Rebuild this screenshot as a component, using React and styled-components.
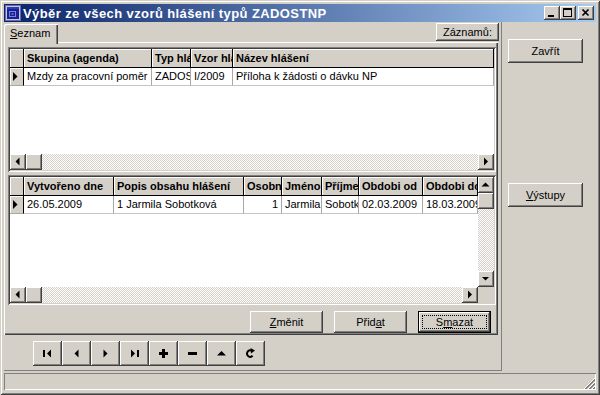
import styled, { createGlobalStyle } from 'styled-components'

const FACE = '#d4d0c8'
const SHADOW = '#808080'
const DARK = '#404040'

const raisedBevel = `
  box-shadow: inset -1px -1px ${DARK}, inset 1px 1px #fff,
    inset -2px -2px ${SHADOW}, inset 2px 2px ${FACE};
`

const sunkenBevel = `
  box-shadow: inset 1px 1px ${SHADOW}, inset -1px -1px #fff,
    inset 2px 2px ${DARK}, inset -2px -2px ${FACE};
`

const GlobalStyle = createGlobalStyle`
  html, body {
    margin: 0;
    padding: 0;
    background: #fff;
  }

  body {
    color: #000;
    font-family: "Liberation Sans", Arial, sans-serif;
    font-size: 11px;
  }

  * {
    box-sizing: border-box;
  }
`

const Window = styled.div`
  display: flex;
  width: 600px;
  height: 395px;
  flex-direction: column;
  padding: 4px;
  background: ${FACE};
  box-shadow: inset 1px 1px ${FACE}, inset -1px -1px ${DARK},
    inset 2px 2px #fff, inset -2px -2px ${SHADOW};
`

const TitleBar = styled.div`
  display: flex;
  height: 18px;
  flex: none;
  align-items: center;
  padding: 0 2px 0 1px;
  background: linear-gradient(to right, #0a246a, #a6caf0);
`

const TitleText = styled.span`
  margin-left: 2px;
  color: #fff;
  font-size: 13px;
  font-weight: bold;
  letter-spacing: 0.4px;
  white-space: nowrap;
`

const CaptionButtons = styled.div`
  display: flex;
  margin-left: auto;
`

const CaptionButton = styled.div`
  display: grid;
  width: 16px;
  height: 14px;
  margin-left: ${({ $gap }) => $gap || 0}px;
  place-items: center;
  background: ${FACE};
  ${raisedBevel}
`

const Main = styled.div`
  display: flex;
  height: 349px;
  flex: none;
`

const LeftPanel = styled.div`
  display: flex;
  width: 498px;
  flex-direction: column;
  box-shadow: inset -1px -1px ${SHADOW};
`

const TabStrip = styled.div`
  display: flex;
  height: 20px;
  align-items: flex-start;
`

const Tab = styled.div`
  position: relative;
  z-index: 1;
  display: flex;
  width: 54px;
  height: 20px;
  align-items: center;
  margin-top: 2px;
  padding: 0 0 2px 6px;
  background: ${FACE};
  box-shadow: inset 1px 1px #fff, inset -1px 0 ${DARK}, inset -2px 0 ${SHADOW};
  border-top-left-radius: 2px;
`

const Button = styled.button`
  display: flex;
  width: ${({ $width }) => $width}px;
  height: ${({ $height }) => $height}px;
  align-items: center;
  justify-content: center;
  padding: ${({ $default }) => ($default ? '4px' : '0')};
  border: 0;
  color: #000;
  background: ${FACE};
  font: inherit;
  ${({ $default }) =>
    $default
      ? `box-shadow: inset 0 0 0 1px #000, inset -2px -2px ${DARK},
          inset 2px 2px #fff, inset -3px -3px ${SHADOW};`
      : raisedBevel}
`

const FocusRing = styled.span`
  display: flex;
  width: 100%;
  height: 100%;
  align-items: center;
  justify-content: center;
  border: 1px dotted #000;
`

const CountButton = styled(Button)`
  margin: 1px 3px 0 auto;
`

const Mnemonic = styled.span`
  text-decoration: underline;
`

const TabPage = styled.div`
  display: flex;
  width: 494px;
  height: 293px;
  flex-direction: column;
  padding: 5px 0 0 4px;
  background: ${FACE};
  box-shadow: inset 1px 1px #fff, inset -1px -1px ${DARK},
    inset -2px -2px ${SHADOW};
`

const Splitter = styled.div`
  height: 3px;
  flex: none;
`

const GridFrame = styled.div`
  display: grid;
  width: 488px;
  height: ${({ $height }) => $height}px;
  flex: none;
  grid-template-columns: ${({ $vscroll }) => ($vscroll ? '1fr 16px' : '1fr')};
  grid-template-rows: 1fr 16px;
  padding: 2px;
  background: #fff;
  ${sunkenBevel}
`

const GridBody = styled.div`
  min-width: 0;
  overflow: hidden;
  background: #fff;
`

const Row = styled.div`
  display: grid;
  grid-template-columns: ${({ $cols }) => $cols};
`

const HeaderCell = styled.div`
  height: 19px;
  padding: 0 1px 0 3px;
  overflow: hidden;
  border-right: 1px solid #000;
  border-bottom: 1px solid #000;
  background: ${FACE};
  box-shadow: inset 1px 1px #fff;
  font-weight: bold;
  line-height: 18px;
  white-space: nowrap;
`

const Cell = styled.div`
  height: 18px;
  padding: 0 3px;
  overflow: hidden;
  border-right: 1px solid #a8a8a8;
  border-bottom: 1px solid #c4c4c4;
  line-height: 17px;
  text-align: ${({ $align }) => $align || 'left'};
  white-space: nowrap;
`

const IndicatorCell = styled.div`
  display: flex;
  height: 18px;
  align-items: center;
  padding-left: 3px;
  border-right: 1px solid #000;
  border-bottom: 1px solid #a8a8a8;
  background: ${FACE};
  box-shadow: inset 1px 1px #fff;
`

const ScrollTrack = styled.div`
  display: flex;
  flex-direction: ${({ $vertical }) => ($vertical ? 'column' : 'row')};
  background: repeating-conic-gradient(#fff 0 25%, ${FACE} 0 50%) 0 0 / 2px 2px;
`

const ScrollButton = styled.div`
  display: grid;
  width: 16px;
  height: 16px;
  flex: none;
  place-items: center;
  background: ${FACE};
  ${raisedBevel}
`

const ScrollFill = styled.div`
  flex: 1;
`

const Corner = styled.div`
  background: ${FACE};
`

const ButtonBar = styled.div`
  display: flex;
  height: 28px;
  flex: none;
  align-items: flex-start;
  justify-content: flex-end;
  gap: 11px;
  padding: 6px 7px 0 0;
`

const Navigator = styled.div`
  display: flex;
  margin: 6px 0 0 29px;
`

const NavButton = styled.div`
  display: grid;
  width: 29px;
  height: 25px;
  place-items: center;
  background: ${FACE};
  ${raisedBevel}
`

const SideColumn = styled.div`
  display: flex;
  flex: 1;
  flex-direction: column;
  gap: 120px;
  padding: 17px 0 0 6px;
`

const StatusBar = styled.div`
  height: 20px;
  flex: none;
  padding-top: 2px;
`

const StatusPanel = styled.div`
  display: flex;
  height: 17px;
  align-items: flex-end;
  justify-content: flex-end;
  box-shadow: inset 1px 1px ${SHADOW}, inset -1px -1px #fff;
`

const arrowPoints = {
  left: '9.5,3.5 5.5,7.5 9.5,11.5',
  right: '6,3.5 10,7.5 6,11.5',
  up: '3.5,9.5 11.5,9.5 7.5,5.5',
  down: '4,6 11,6 7.5,9.5',
}

function Arrow({ dir }) {
  return (
    <svg width="16" height="16" viewBox="0 0 16 16">
      <polygon points={arrowPoints[dir]} fill="#000" />
    </svg>
  )
}

function HScroll() {
  return (
    <ScrollTrack>
      <ScrollButton>
        <Arrow dir="left" />
      </ScrollButton>
      <ScrollButton />
      <ScrollFill />
      <ScrollButton>
        <Arrow dir="right" />
      </ScrollButton>
    </ScrollTrack>
  )
}

function VScroll() {
  return (
    <ScrollTrack $vertical>
      <ScrollButton>
        <Arrow dir="up" />
      </ScrollButton>
      <ScrollButton />
      <ScrollFill />
      <ScrollButton>
        <Arrow dir="down" />
      </ScrollButton>
    </ScrollTrack>
  )
}

function RowPointer() {
  return (
    <svg width="5" height="9" viewBox="0 0 5 9">
      <polygon points="0,0 4.5,4.5 0,9" fill="#000" />
    </svg>
  )
}

function DataGrid({ cols, headers, row, height, vscroll }) {
  return (
    <GridFrame $height={height} $vscroll={vscroll}>
      <GridBody>
        <Row $cols={cols}>
          <HeaderCell />
          {headers.map((title) => (
            <HeaderCell key={title}>{title}</HeaderCell>
          ))}
        </Row>
        <Row $cols={cols}>
          <IndicatorCell>
            <RowPointer />
          </IndicatorCell>
          {row.map((cell, index) => (
            <Cell $align={cell.align} key={index}>
              {cell.text}
            </Cell>
          ))}
        </Row>
      </GridBody>
      {vscroll && <VScroll />}
      <HScroll />
      {vscroll && <Corner />}
    </GridFrame>
  )
}

function NavIcon({ kind }) {
  return (
    <svg width="11" height="11" viewBox="0 0 11 11">
      {kind === 'first' && (
        <>
          <rect x="1" y="2" width="2" height="7" fill="#000" />
          <polygon points="9,1.5 5,5.5 9,9.5" fill="#000" />
        </>
      )}
      {kind === 'prior' && <polygon points="7.5,1.5 3.5,5.5 7.5,9.5" fill="#000" />}
      {kind === 'next' && <polygon points="3.5,1.5 7.5,5.5 3.5,9.5" fill="#000" />}
      {kind === 'last' && (
        <>
          <polygon points="2,1.5 6,5.5 2,9.5" fill="#000" />
          <rect x="8" y="2" width="2" height="7" fill="#000" />
        </>
      )}
      {kind === 'insert' && (
        <path d="M4 1h3v3h3v3H7v3H4V7H1V4h3z" fill="#000" />
      )}
      {kind === 'delete' && <rect x="1" y="4" width="9" height="3" fill="#000" />}
      {kind === 'edit' && <polygon points="1,7.5 10,7.5 5.5,3" fill="#000" />}
      {kind === 'refresh' && (
        <>
          <path
            d="M7.6 7.8 A3.2 3.2 0 1 1 6.4 2.6"
            fill="none"
            stroke="#000"
            strokeWidth="2"
          />
          <polygon points="5.5,0 10,2.5 6,5.5" fill="#000" />
        </>
      )}
    </svg>
  )
}

function WindowIcon() {
  return (
    <svg width="16" height="16" viewBox="0 0 16 16">
      <rect x="0.5" y="0.5" width="15" height="15" fill="#c6c6e6" stroke="#6a6aa0" />
      <rect x="2" y="2" width="12" height="12" fill="#1b1f8f" />
      <rect x="4.5" y="6.5" width="6" height="5" fill="none" stroke="#6f86e8" />
      <rect x="6.5" y="8.5" width="2" height="1" fill="#9fb4ff" />
      <rect x="2" y="2" width="12" height="2" fill="#2c3cb8" />
    </svg>
  )
}

function SizeGrip() {
  return (
    <svg width="13" height="13" viewBox="0 0 13 13">
      {[0, 4, 8].map((offset) => (
        <g key={offset}>
          <line x1={12} y1={1 + offset} x2={1 + offset} y2={12} stroke="#fff" />
          <line x1={12} y1={2 + offset} x2={2 + offset} y2={12} stroke={SHADOW} />
          <line x1={12} y1={3 + offset} x2={3 + offset} y2={12} stroke={SHADOW} />
        </g>
      ))}
    </svg>
  )
}

const navKinds = ['first', 'prior', 'next', 'last', 'insert', 'delete', 'edit', 'refresh']

const topHeaders = ['Skupina (agenda)', 'Typ hlášení', 'Vzor hlášení', 'Název hlášení']
const topRow = [
  { text: 'Mzdy za pracovní poměr' },
  { text: 'ZADOSTNP' },
  { text: 'I/2009' },
  { text: 'Příloha k žádosti o dávku NP' },
]

const bottomHeaders = [
  'Vytvořeno dne',
  'Popis obsahu hlášení',
  'Osobní číslo',
  'Jméno',
  'Příjmení',
  'Obdobi od',
  'Obdobi do',
]
const bottomRow = [
  { text: '26.05.2009' },
  { text: '1 Jarmila Sobotková' },
  { text: '1', align: 'right' },
  { text: 'Jarmila' },
  { text: 'Sobotková' },
  { text: '02.03.2009' },
  { text: '18.03.2009' },
]

export default function App() {
  return (
    <>
      <GlobalStyle />
      <Window>
        <TitleBar>
          <WindowIcon />
          <TitleText>Výběr ze všech vzorů hlášení typů ZADOSTNP</TitleText>
          <CaptionButtons>
            <CaptionButton>
              <svg width="16" height="14" viewBox="0 0 16 14">
                <rect x="4" y="9" width="6" height="2" fill="#000" />
              </svg>
            </CaptionButton>
            <CaptionButton>
              <svg width="16" height="14" viewBox="0 0 16 14">
                <rect x="3.5" y="2.5" width="8" height="8" fill="none" stroke="#000" />
                <rect x="3" y="2" width="9" height="2" fill="#000" />
              </svg>
            </CaptionButton>
            <CaptionButton $gap={2}>
              <svg width="16" height="14" viewBox="0 0 16 14">
                <path d="M4.5 3.5 L10.5 9.5 M10.5 3.5 L4.5 9.5" stroke="#000" strokeWidth="1.7" />
              </svg>
            </CaptionButton>
          </CaptionButtons>
        </TitleBar>

        <Main>
          <LeftPanel>
            <TabStrip>
              <Tab>
                <Mnemonic>S</Mnemonic>eznam
              </Tab>
              <CountButton $width={63} $height={18}>
                Záznamů:
              </CountButton>
            </TabStrip>

            <TabPage>
              <DataGrid
                cols="14px 128px 39px 42px 1fr"
                headers={topHeaders}
                height={125}
                row={topRow}
              />
              <Splitter />
              <DataGrid
                cols="14px 90px 130px 38px 40px 37px 64px 55px"
                headers={bottomHeaders}
                height={130}
                row={bottomRow}
                vscroll
              />
              <ButtonBar>
                <Button $width={73} $height={22}>
                  <span>
                    <Mnemonic>Z</Mnemonic>měnit
                  </span>
                </Button>
                <Button $width={73} $height={22}>
                  <span>
                    Přid<Mnemonic>a</Mnemonic>t
                  </span>
                </Button>
                <Button $default $width={73} $height={22}>
                  <FocusRing>
                    S<Mnemonic>m</Mnemonic>azat
                  </FocusRing>
                </Button>
              </ButtonBar>
            </TabPage>

            <Navigator>
              {navKinds.map((kind) => (
                <NavButton key={kind}>
                  <NavIcon kind={kind} />
                </NavButton>
              ))}
            </Navigator>
          </LeftPanel>

          <SideColumn>
            <Button $width={75} $height={24}>
              Zavřít
            </Button>
            <Button $width={75} $height={24}>
              <span>
                <Mnemonic>V</Mnemonic>ýstupy
              </span>
            </Button>
          </SideColumn>
        </Main>

        <StatusBar>
          <StatusPanel>
            <SizeGrip />
          </StatusPanel>
        </StatusBar>
      </Window>
    </>
  )
}
